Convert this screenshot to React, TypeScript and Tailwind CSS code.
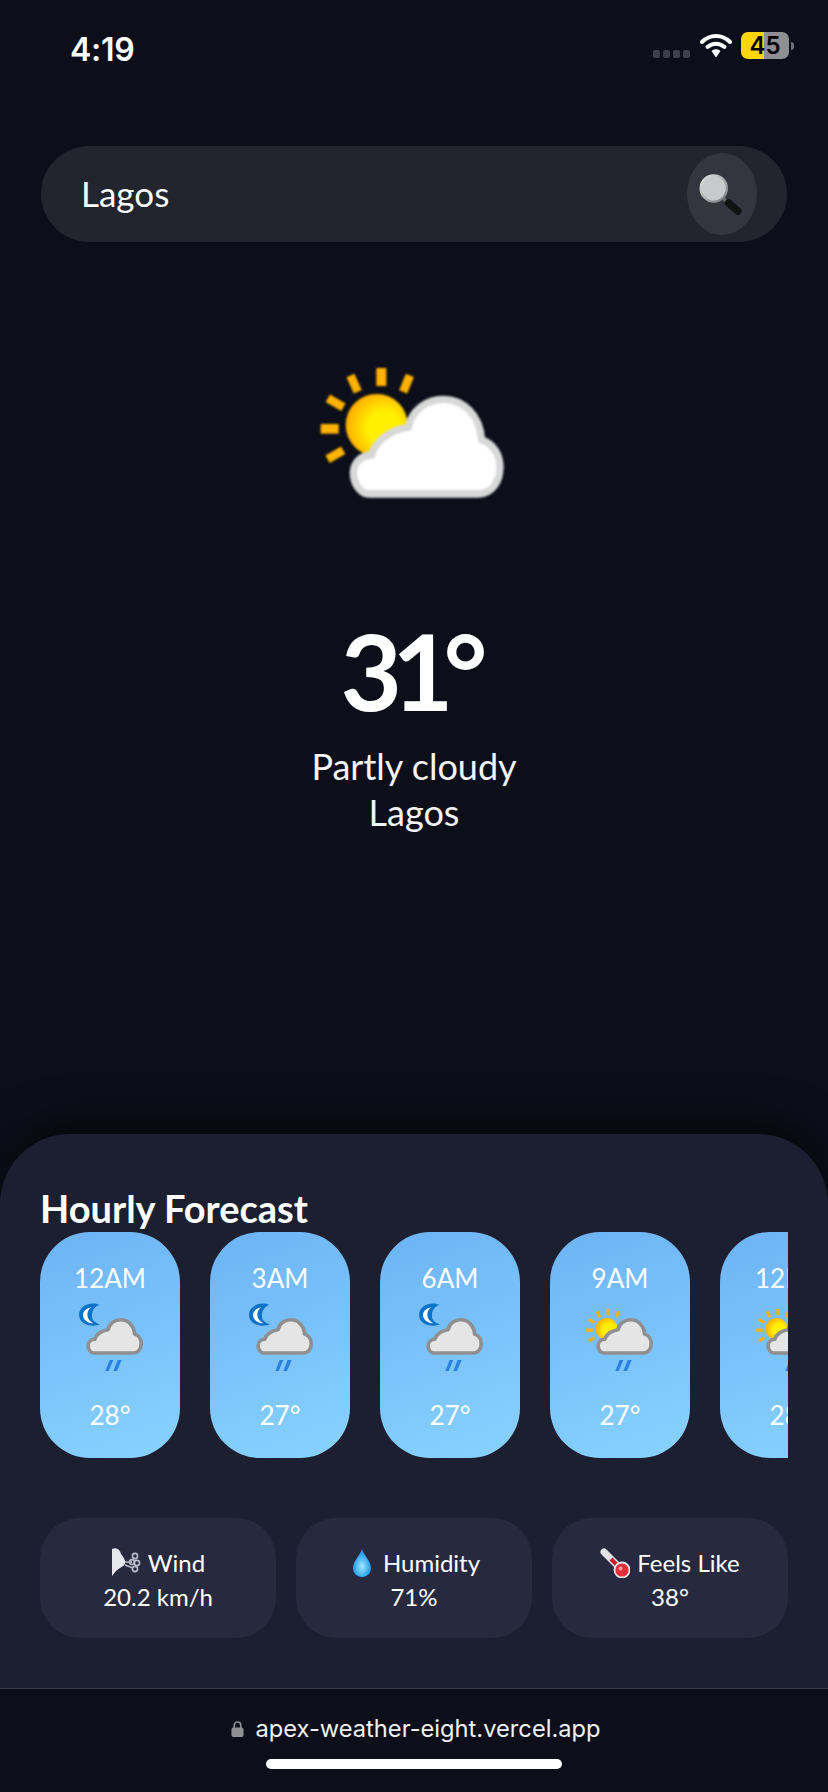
import React from 'react';

const CLOUD =
  'M268 462 C240 462 220 430 220 398 C222 365 245 345 275 345 C285 305 330 268 385 262 C395 210 440 178 490 178 C550 178 600 225 605 300 C640 310 660 345 660 382 C660 425 635 462 595 462 Z';

const Sun: React.FC = () => (
  <g>
    <circle cx="290" cy="255" r="93" fill="url(#sunFill)" />
    <g fill="#ffb300">
      <rect x="289" y="84" width="30" height="54" />
      <rect x="367" y="104" width="26" height="54" transform="rotate(22 380 130)" />
      <rect x="209" y="104" width="26" height="54" transform="rotate(-24 222 130)" />
      <rect x="153" y="162" width="26" height="54" transform="rotate(-60 166 188)" />
      <rect x="122" y="252" width="54" height="29" />
      <rect x="154" y="318" width="26" height="54" transform="rotate(60 167 344)" />
    </g>
  </g>
);

const SunDefs: React.FC = () => (
  <defs>
    <radialGradient id="sunFill" cx="0.62" cy="0.55" r="0.6">
      <stop offset="0.45" stopColor="#fff000" />
      <stop offset="1" stopColor="#ffb000" />
    </radialGradient>
  </defs>
);

const BigWeatherIcon: React.FC = () => (
  <svg viewBox="-12 0 828 570" className="w-[276px] h-[190px] blur-[1.2px]">
    <SunDefs />
    <Sun />
    <path d={CLOUD} fill="#ffffff" stroke="#d8d8d8" strokeWidth="22" strokeLinejoin="round" />
  </svg>
);

const Moon: React.FC = () => (
  <g>
    <path
      d="M88 42 C64 30 27 44 27 72 C27 98 62 112 90 100 C72 95 64 85 66 70 C67 58 74 46 88 42Z"
      fill="#0a72c8"
    />
    <path d="M64 49 C50 52 39 60 39 72 C39 86 54 97 70 97 C58 90 52 82 52 71 C52 61 57 53 64 49Z" fill="#ffffff" />
  </g>
);

const HourIcon: React.FC<{ kind: 'moon' | 'sun' }> = ({ kind }) => (
  <svg viewBox="-30 -15 300 300" className="w-[100px] h-[100px] blur-[0.5px]">
    <SunDefs />
    {kind === 'moon' && <Moon />}
    <g transform="translate(-25.3 24.25) scale(0.362 0.35)">
      {kind === 'sun' && <Sun />}
      <path d={CLOUD} fill="#e5e5e6" stroke="#8f8f90" strokeWidth="30" strokeLinejoin="round" />
    </g>
    <g fill="#2b80e2">
      <path d="M119 207 L130 207 L116 240 L106 240Z" />
      <path d="M143 207 L155 207 L141 240 L130 240Z" />
    </g>
  </svg>
);

const SearchIcon: React.FC = () => (
  <svg viewBox="80 95 140 140" className="w-[47px] h-[47px] mr-[4px]">
    <defs>
      <linearGradient id="ring" x1="0" y1="0" x2="1" y2="1">
        <stop offset="0" stopColor="#e8e8ea" />
        <stop offset="1" stopColor="#77777c" />
      </linearGradient>
    </defs>
    <line x1="158" y1="176" x2="174" y2="192" stroke="#6c6d72" strokeWidth="9" />
    <line x1="174" y1="190" x2="202" y2="215" stroke="#111214" strokeWidth="22" strokeLinecap="round" />
    <circle cx="130" cy="147" r="39" fill="#c9cacc" stroke="url(#ring)" strokeWidth="7" />
  </svg>
);

const WindIcon: React.FC = () => (
  <svg viewBox="0 0 30 34" className="w-[30px] h-[34px] blur-[0.3px]">
    <path d="M1 3 C5 1 9 3 10 8 C13 12 15 15 14 18 C12 21 8 22 5 25 L1 30Z" fill="#e6e7ee" />
    <g fill="none" stroke="#b9bcc8" strokeWidth="1.6">
      <circle cx="24" cy="10" r="2.6" />
      <circle cx="26" cy="17" r="2.6" />
      <circle cx="21" cy="16" r="2.4" />
      <circle cx="24" cy="23" r="2.6" />
      <path d="M14 16 L21 16 M14 19 L22 22" />
    </g>
  </svg>
);

const DropIcon: React.FC = () => (
  <svg viewBox="0 0 18 28" className="w-[18px] h-[28px]">
    <defs>
      <radialGradient id="drop" cx="0.5" cy="0.62" r="0.55">
        <stop offset="0" stopColor="#a8e6ff" />
        <stop offset="0.6" stopColor="#45b4f2" />
        <stop offset="1" stopColor="#1b8fe0" />
      </radialGradient>
    </defs>
    <path d="M9 0 C10.5 6 18 12 18 19 C18 24.5 14 28 9 28 C4 28 0 24.5 0 19 C0 12 7.5 6 9 0Z" fill="url(#drop)" />
  </svg>
);

const ThermometerIcon: React.FC = () => (
  <svg viewBox="0 0 30 30" className="w-[30px] h-[30px] blur-[0.3px]">
    <line x1="4" y1="4" x2="20" y2="20" stroke="#e2e3e8" strokeWidth="7" strokeLinecap="round" />
    <line x1="11" y1="11" x2="20" y2="20" stroke="#c8202c" strokeWidth="4" />
    <circle cx="22" cy="22" r="7.5" fill="#e5303c" stroke="#e2e3e8" strokeWidth="1.8" />
    <circle cx="20.5" cy="20.5" r="2" fill="#ff9aa0" />
  </svg>
);

const hours = [
  { time: '12AM', kind: 'moon', temp: '28°' },
  { time: '3AM', kind: 'moon', temp: '27°' },
  { time: '6AM', kind: 'moon', temp: '27°' },
  { time: '9AM', kind: 'sun', temp: '27°' },
  { time: '12PM', kind: 'sun', temp: '28°' },
] as const;

const App: React.FC = () => {
  return (
    <div className="w-[828px] h-[1792px] overflow-hidden flex flex-col bg-[#0c0f1a] text-white font-[Lato,sans-serif]">
      {/* status bar */}
      <div className="h-[146px] shrink-0 flex items-start justify-between pt-[33px] pl-[70px] pr-[34px] font-[Inter,sans-serif]">
        <span className="text-[32px] leading-[34px] font-semibold tracking-[-0.3px]">4:19</span>
        <div className="flex items-center -mt-[1px]">
          <div className="flex gap-[3px] mt-[17px]">
            <div className="w-[7px] h-[8px] rounded-[2px] bg-[#3d404c]" />
            <div className="w-[7px] h-[8px] rounded-[2px] bg-[#3d404c]" />
            <div className="w-[7px] h-[8px] rounded-[2px] bg-[#3d404c]" />
            <div className="w-[7px] h-[8px] rounded-[2px] bg-[#3d404c]" />
          </div>
          <svg viewBox="0 0 32 25" className="w-[32px] h-[25px] ml-[10px]">
            <path d="M2 9 C10 1 22 1 30 9" fill="none" stroke="#fff" strokeWidth="4" strokeLinecap="round" />
            <path d="M7.5 14 C12.5 9.5 19.5 9.5 24.5 14" fill="none" stroke="#fff" strokeWidth="4" strokeLinecap="round" />
            <path d="M11.5 18 L16 24.5 L20.5 18 C18 15.6 14 15.6 11.5 18Z" fill="#fff" />
          </svg>
          <div className="w-[48px] h-[27px] ml-[9px] rounded-[7px] flex items-center justify-center bg-[linear-gradient(90deg,#ffd60a_47%,#8e8e93_47%)] text-black text-[24px] font-semibold">
            45
          </div>
          <div className="w-[3px] h-[8px] ml-[2px] rounded-r-[3px] bg-[#6f7076]" />
        </div>
      </div>

      {/* search */}
      <div className="shrink-0 h-[96px] mx-[41px] rounded-[48px] bg-[#22242e] flex items-center justify-between pl-[40px] pr-[30px]">
        <span className="text-[35px] text-white -mt-[2px]">Lagos</span>
        <button className="w-[70px] h-[82px] rounded-[50%] bg-[#34363f] flex items-center justify-center">
          <SearchIcon />
        </button>
      </div>

      {/* current weather */}
      <div className="flex-1 flex flex-col items-center pt-[98px]">
        <BigWeatherIcon />
        <div className="mt-[84px] pr-[10px] text-[106px] leading-[112px] font-bold tracking-[-10px]">31°</div>
        <div className="mt-[17px] text-[36px] leading-[46px] text-[#f4f5f8]">Partly cloudy</div>
        <div className="text-[36px] leading-[46px] text-[#f4f5f8]">Lagos</div>
      </div>

      {/* bottom sheet */}
      <div className="shrink-0 h-[554px] rounded-t-[70px] bg-[#1b1f30] px-[40px] pt-[54px] shadow-[0_-12px_40px_rgba(0,0,0,0.55)]">
        <h2 className="h-[44px] text-[38px] leading-[40px] font-bold">Hourly Forecast</h2>
        <div className="flex gap-[30px] overflow-hidden">
          {hours.map((h) => (
            <div
              key={h.time}
              className="w-[140px] h-[226px] shrink-0 rounded-[50px] bg-[linear-gradient(160deg,#6db3f6,#88d2ff)] flex flex-col items-center pt-[30px] text-[26px] leading-[32px]"
            >
              <span>{h.time}</span>
              <div className="h-[102px] -mt-[9px] flex items-center">
                <HourIcon kind={h.kind} />
              </div>
              <span className="mt-[12px]">{h.temp}</span>
            </div>
          ))}
        </div>
        <div className="mt-[60px] grid grid-cols-3 gap-[20px]">
          <div className="h-[120px] pt-[4px] rounded-[40px] bg-[#272a3f] flex flex-col items-center justify-center text-[24px] leading-[34px]">
            <div className="flex items-center gap-[7px]">
              <WindIcon />
              <span>Wind</span>
            </div>
            <span>20.2 km/h</span>
          </div>
          <div className="h-[120px] pt-[4px] rounded-[40px] bg-[#272a3f] flex flex-col items-center justify-center text-[24px] leading-[34px]">
            <div className="flex items-center gap-[12px] pl-[5px]">
              <DropIcon />
              <span>Humidity</span>
            </div>
            <span>71%</span>
          </div>
          <div className="h-[120px] pt-[4px] rounded-[40px] bg-[#272a3f] flex flex-col items-center justify-center text-[24px] leading-[34px]">
            <div className="flex items-center gap-[7px]">
              <ThermometerIcon />
              <span>Feels Like</span>
            </div>
            <span>38°</span>
          </div>
        </div>
      </div>

      {/* safari address bar */}
      <div className="shrink-0 h-[104px] border-t border-[#3a3d48] bg-[#0c0f1a] flex flex-col items-center pt-[24px] font-[Inter,sans-serif]">
        <div className="flex items-center gap-[11px] pl-[4px] text-[23.7px] leading-[32px] text-[#f2f2f4]">
          <svg viewBox="0 0 14 18" className="w-[13px] h-[18px]">
            <path d="M3.5 8 V5 a3.5 3.5 0 0 1 7 0 V8" fill="none" stroke="#8e8e93" strokeWidth="1.8" />
            <rect x="0.5" y="7.5" width="13" height="10" rx="2" fill="#8e8e93" />
          </svg>
          <span>apex-weather-eight.vercel.app</span>
        </div>
        <div className="mt-[14px] w-[296px] h-[10px] rounded-full bg-white" />
      </div>
    </div>
  );
};

export default App;
